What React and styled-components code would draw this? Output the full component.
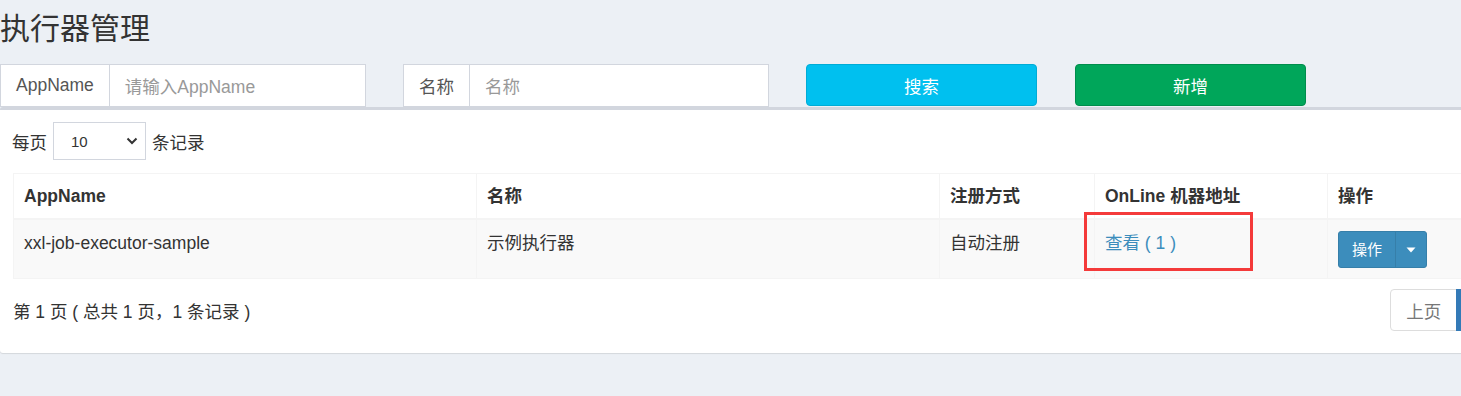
import React from "react";
import styled, { createGlobalStyle } from "styled-components";

const Global = createGlobalStyle`
  html, body { margin: 0; padding: 0; background: #ecf0f5; overflow: hidden; }
  body { font-family: "Liberation Sans", "Noto Sans CJK SC", sans-serif; color: #333; }
  * { box-sizing: border-box; }
`;

const Page = styled.div`
  width: 1461px;
  height: 396px;
  overflow: hidden;
  background: #ecf0f5;
`;

const Title = styled.h1`
  margin: 0;
  padding-top: 12px;
  height: 64px;
  font-size: 30px;
  line-height: 34px;
  font-weight: 400;
  color: #333;
`;

const FilterRow = styled.div`
  display: flex;
  height: 43px;
`;

const InputGroup = styled.div`
  display: flex;
  width: 366px;
  margin-right: ${(p) => p.$gap || 0}px;
  border: 1px solid #d2d6de;
  background: #fff;
  font-size: 17.5px;
  height: 43px;
`;

const Addon = styled.span`
  display: flex;
  align-items: center;
  padding: 0 15px;
  color: #555;
  border-right: 1px solid #d2d6de;
  white-space: nowrap;
`;

const FakeInput = styled.span`
  flex: 1;
  display: flex;
  align-items: center;
  padding: 0 15px;
  color: #999;
`;

const Button = styled.button`
  width: 231px;
  height: 42px;
  margin-right: ${(p) => p.$gap || 0}px;
  border: 1px solid ${(p) => p.$border};
  background: ${(p) => p.$bg};
  color: #fff;
  border-radius: 4px;
  font-family: inherit;
  font-size: 17.5px;
  padding: 0;
`;

const Card = styled.div`
  width: 1577px;
  background: #fff;
  border-top: 3px solid #d2d6de;
  border-radius: 3px;
  box-shadow: 0 1px 1px rgba(0, 0, 0, 0.1);
  padding: 12px 13px 22px 12px;
  font-size: 17.5px;
`;

const LengthRow = styled.div`
  display: flex;
  align-items: center;
  gap: 6px;
  height: 38px;
  color: #333;
`;

const SelectBox = styled.div`
  width: 93px;
  height: 38px;
  border: 1px solid #d2d6de;
  display: flex;
  align-items: center;
  justify-content: space-between;
  padding: 0 7px 0 17px;
  font-size: 15px;
  color: #333;
`;

const Table = styled.table`
  margin-top: 13px;
  margin-left: 1px;
  width: 1548px;
  border-collapse: collapse;
  table-layout: fixed;
  border: 1px solid #f4f4f4;
`;

const Th = styled.th`
  text-align: left;
  font-weight: 700;
  padding: 10px 10px;
  line-height: 24px;
  border: 1px solid #f4f4f4;
  border-bottom: 2px solid #f4f4f4;
  color: #333;
`;

const Tr = styled.tr`
  background: ${(p) => (p.$striped ? "#f9f9f9" : "#fff")};
`;

const Td = styled.td`
  position: relative;
  vertical-align: top;
  padding: 11px 10px 10px;
  line-height: 25px;
  height: 58px;
  border: 1px solid #f4f4f4;
  color: #333;
`;

const Link = styled.a`
  color: #3c8dbc;
  text-decoration: none;
`;

const Highlight = styled.div`
  position: absolute;
  left: -11px;
  top: -8px;
  width: 169px;
  height: 59px;
  border: 3px solid #f43a3a;
  pointer-events: none;
`;

const BtnGroup = styled.div`
  display: inline-flex;
  height: 37px;
  border-radius: 3px;
  overflow: hidden;
  background: #3c8dbc;
  border: 1px solid #367fa9;
`;

const BtnPart = styled.span`
  display: flex;
  align-items: center;
  justify-content: center;
  padding: 0 ${(p) => p.$pad}px;
  color: #fff;
  font-size: 15px;
  border-left: ${(p) => (p.$divider ? "1px solid #367fa9" : "none")};
`;

const Footer = styled.div`
  display: flex;
  align-items: center;
  justify-content: space-between;
  padding-top: 10px;
  padding-left: 1px;
`;

const Info = styled.div`
  color: #333;
  font-size: 17.5px;
`;

const Pagination = styled.ul`
  display: flex;
  margin: 0;
  padding: 0;
  list-style: none;
`;

const PageItem = styled.li`
  height: 42px;
  display: flex;
  align-items: center;
  padding: 0 ${(p) => p.$pad}px;
  border: 1px solid ${(p) => (p.$active ? "#337ab7" : "#ddd")};
  margin-left: -1px;
  background: ${(p) => (p.$active ? "#337ab7" : "#fff")};
  color: ${(p) => (p.$active ? "#fff" : "#777")};
  border-radius: ${(p) => p.$radius || "0"};
`;

export default function App() {
  return (
    <Page>
      <Global />
      <Title>执行器管理</Title>
      <FilterRow>
        <InputGroup $gap={37}>
          <Addon>AppName</Addon>
          <FakeInput>请输入AppName</FakeInput>
        </InputGroup>
        <InputGroup $gap={37}>
          <Addon>名称</Addon>
          <FakeInput>名称</FakeInput>
        </InputGroup>
        <Button $gap={38} $bg="#00c0ef" $border="#00acd6">搜索</Button>
        <Button $bg="#00a65a" $border="#008d4c">新增</Button>
      </FilterRow>
      <Card>
        <LengthRow>
          <span>每页</span>
          <SelectBox>
            <span>10</span>
            <svg width="12" height="8" viewBox="0 0 12 8">
              <path d="M1.5 1.5 L6 6 L10.5 1.5" fill="none" stroke="#333" strokeWidth="2" />
            </svg>
          </SelectBox>
          <span>条记录</span>
        </LengthRow>
        <Table>
          <colgroup>
            <col style={{ width: 463 }} />
            <col style={{ width: 463 }} />
            <col style={{ width: 155 }} />
            <col style={{ width: 233 }} />
            <col style={{ width: 234 }} />
          </colgroup>
          <thead>
            <tr>
              <Th>AppName</Th>
              <Th>名称</Th>
              <Th>注册方式</Th>
              <Th>OnLine 机器地址</Th>
              <Th>操作</Th>
            </tr>
          </thead>
          <tbody>
            <Tr $striped>
              <Td>xxl-job-executor-sample</Td>
              <Td>示例执行器</Td>
              <Td>自动注册</Td>
              <Td>
                <Link>查看 ( 1 )</Link>
                <Highlight />
              </Td>
              <Td>
                <BtnGroup>
                  <BtnPart $pad={13}>操作</BtnPart>
                  <BtnPart $pad={10} $divider>
                    <svg width="10" height="6" viewBox="0 0 10 6">
                      <path d="M0.5 0.5 L9.5 0.5 L5 5.5 Z" fill="#fff" />
                    </svg>
                  </BtnPart>
                </BtnGroup>
              </Td>
            </Tr>
          </tbody>
        </Table>
        <Footer>
          <Info>第 1 页 ( 总共 1 页，1 条记录 )</Info>
          <Pagination>
            <PageItem $pad={15} $radius="4px 0 0 4px">上页</PageItem>
            <PageItem $pad={15} $active>1</PageItem>
            <PageItem $pad={15} $radius="0 4px 4px 0">下页</PageItem>
          </Pagination>
        </Footer>
      </Card>
    </Page>
  );
}
